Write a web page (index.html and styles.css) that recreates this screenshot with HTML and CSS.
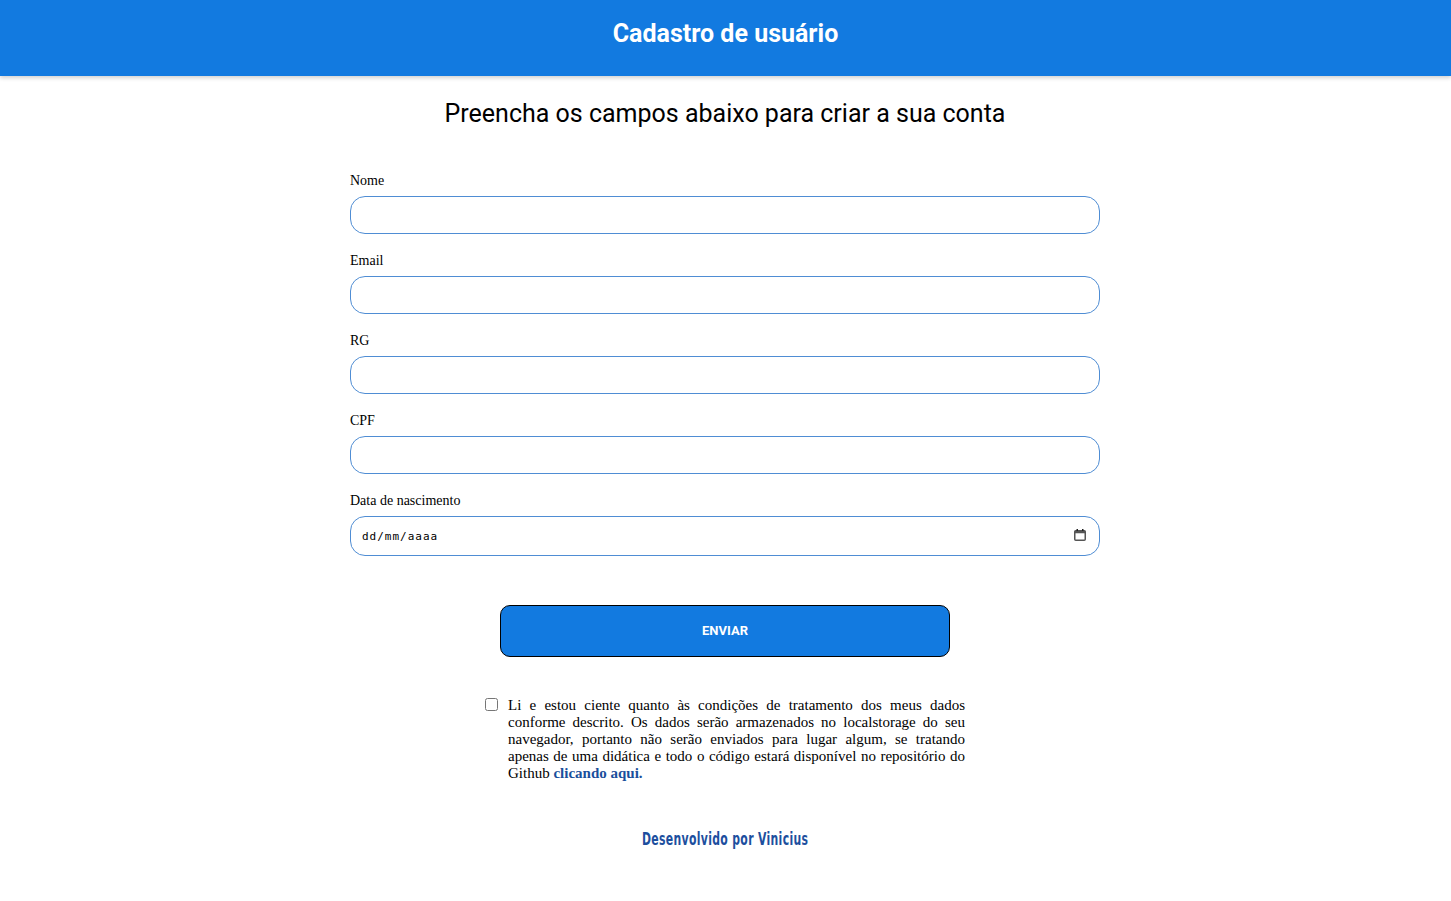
FILE: index.html
```html
<!DOCTYPE html>
<html lang="pt-BR">
<head>
<meta charset="utf-8">
<title>Cadastro de usuário</title>
<link rel="stylesheet" href="styles.css">
</head>
<body>
<header class="topbar">
  <h1 class="topbar-title">Cadastro de usuário</h1>
</header>
<main class="content">
  <h2 class="subtitle">Preencha os campos abaixo para criar a sua conta</h2>
  <form class="form">
    <div class="field">
      <label class="field-label" for="nome">Nome</label>
      <input class="field-input" id="nome" type="text">
    </div>
    <div class="field">
      <label class="field-label" for="email">Email</label>
      <input class="field-input" id="email" type="email">
    </div>
    <div class="field">
      <label class="field-label" for="rg">RG</label>
      <input class="field-input" id="rg" type="text">
    </div>
    <div class="field">
      <label class="field-label" for="cpf">CPF</label>
      <input class="field-input" id="cpf" type="text">
    </div>
    <div class="field">
      <label class="field-label" for="nasc">Data de nascimento</label>
      <div class="date-wrap">
        <input class="field-input field-date" id="nasc" type="text" placeholder="dd/mm/aaaa">
        <svg class="date-icon" width="12" height="12" viewBox="0 0 12 12" aria-hidden="true">
          <rect x="0.75" y="1.75" width="10.5" height="9.5" rx="1" fill="none" stroke="#555" stroke-width="1.5"/>
          <rect x="0.75" y="1.75" width="10.5" height="2.5" fill="#555"/>
          <rect x="2.5" y="0" width="1.5" height="2" fill="#222"/>
          <rect x="8" y="0" width="1.5" height="2" fill="#222"/>
        </svg>
      </div>
    </div>
    <button class="submit" type="button">ENVIAR</button>
    <div class="terms">
      <input class="terms-check" type="checkbox" id="terms">
      <p class="terms-text">Li e estou ciente quanto às condições de tratamento dos meus dados conforme descrito. Os dados serão armazenados no localstorage do seu navegador, portanto não serão enviados para lugar algum, se tratando apenas de uma didática e todo o código estará disponível no repositório do Github <a class="terms-link" href="#">clicando aqui.</a></p>
    </div>
  </form>
  <footer class="credit"><span class="credit-text">Desenvolvido por Vinicius</span></footer>
</main>
</body>
</html>
```
FILE: styles.css
```css
* { box-sizing: border-box; }
html, body { margin: 0; padding: 0; background: #fff; }
body { font-family: "Liberation Serif", "Times New Roman", serif; color: #000; }

.topbar {
  height: 76px;
  background: #127ae0;
  display: flex;
  align-items: center;
  justify-content: center;
  box-shadow: 0 2px 4px rgba(0,0,0,0.18);
}
.topbar-title {
  margin: 0;
  padding-bottom: 9px;
  font-family: Roboto, "Noto Sans", sans-serif;
  font-weight: 700;
  font-size: 25px;
  color: #fff;
}

.content {
  display: flex;
  flex-direction: column;
  align-items: center;
  padding-right: 1px;
}
.subtitle {
  margin: 23px 0 0;
  font-family: Roboto, "Noto Sans", sans-serif;
  font-weight: 400;
  font-size: 25px;
  line-height: 29px;
}

.form {
  width: 750px;
  margin-top: 43px;
  display: flex;
  flex-direction: column;
  align-items: center;
}
.field {
  width: 100%;
  display: flex;
  flex-direction: column;
  margin-bottom: 17px;
}
.field-label {
  font-size: 14px;
  line-height: 16px;
  padding-top: 2px;
  margin-bottom: 7px;
}
.field-input {
  width: 100%;
  height: 38px;
  border: 1px solid #4f8dd4;
  border-radius: 15px;
  padding: 0 11px;
  font-size: 13px;
  background: #fff;
  outline: none;
}
.date-wrap {
  position: relative;
}
.field-date {
  height: 40px;
  font-family: "DejaVu Sans Mono", monospace;
  font-size: 11px;
  letter-spacing: 1px;
}
.field-date::placeholder {
  color: #000;
  opacity: 1;
}
.date-icon {
  position: absolute;
  right: 14px;
  top: 13px;
}

.submit {
  margin-top: 32px;
  width: 450px;
  height: 52px;
  background: #127ae0;
  border: 1px solid #000;
  border-radius: 10px;
  color: #fff;
  font-family: Roboto, "Noto Sans", sans-serif;
  font-weight: 700;
  font-size: 13px;
  padding-bottom: 2px;
}

.terms {
  width: 480px;
  margin-top: 40px;
  display: flex;
  align-items: flex-start;
}
.terms-check {
  margin: 1px 10px 0 0;
  width: 13px;
  height: 13px;
  flex: none;
}
.terms-text {
  margin: 0;
  font-size: 15px;
  line-height: 17px;
  text-align: justify;
}
.terms-link {
  color: #1a4f9c;
  font-weight: 700;
  text-decoration: none;
}

.credit {
  margin-top: 46px;
  display: flex;
  justify-content: center;
}
.credit-text {
  display: inline-block;
  font-family: "DejaVu Sans Condensed", "DejaVu Sans", sans-serif;
  font-weight: 700;
  font-size: 18px;
  line-height: 22px;
  letter-spacing: 0.5px;
  color: #1d4f9e;
  transform: scaleX(0.67);
}
```
